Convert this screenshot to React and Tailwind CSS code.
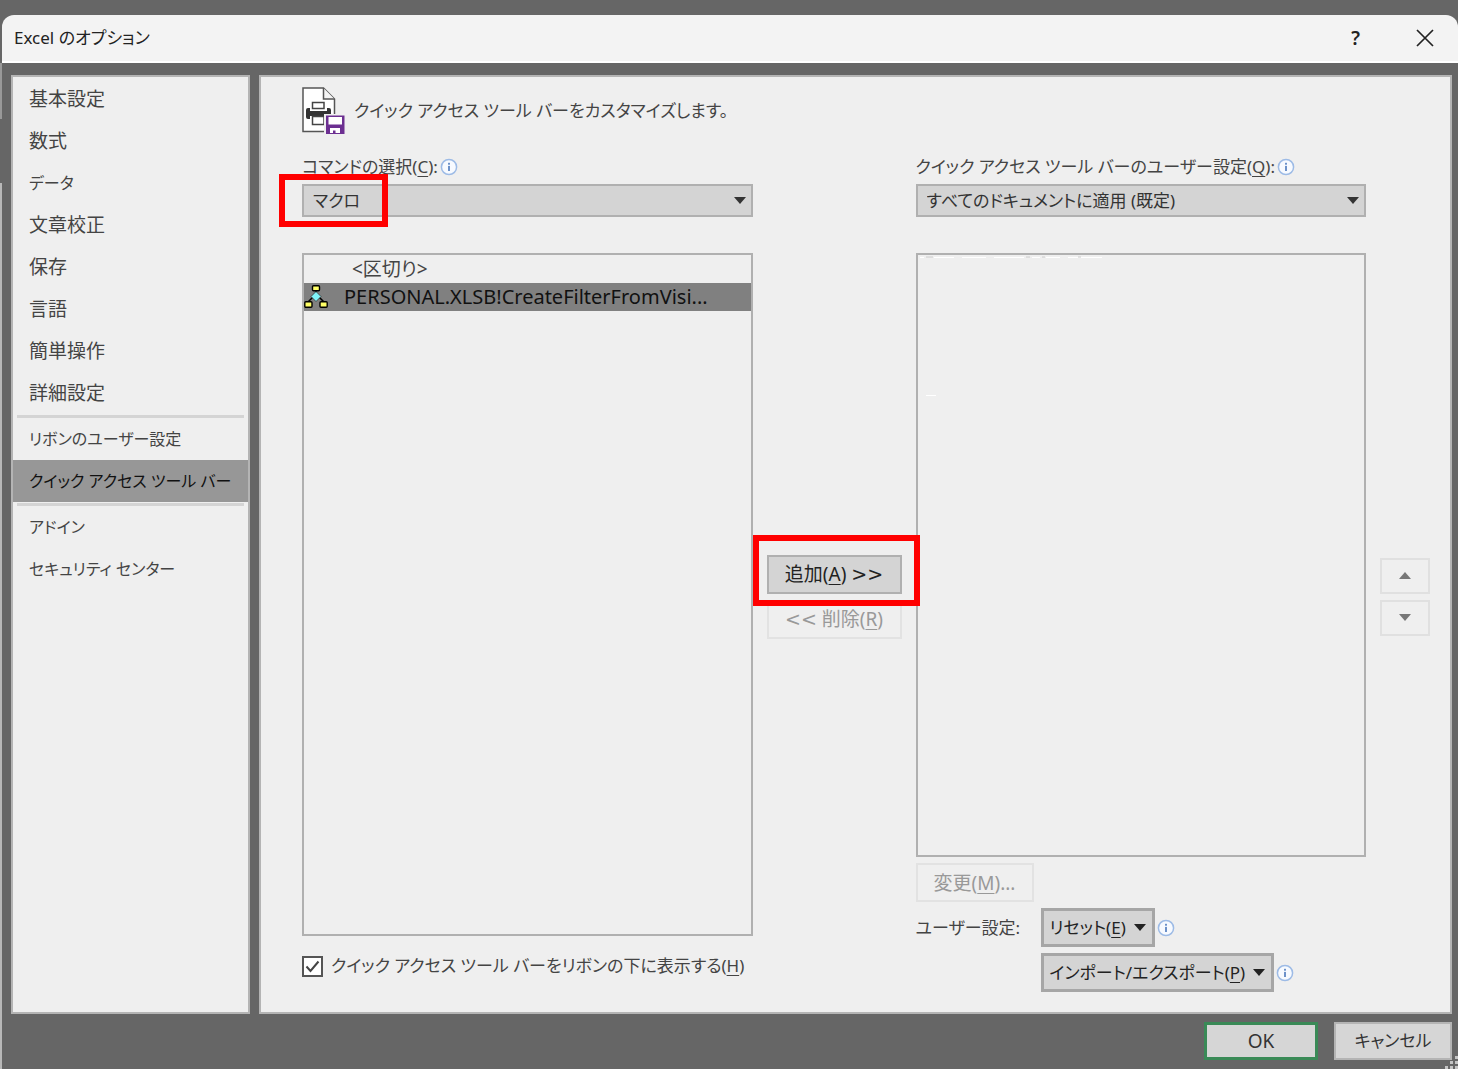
const categories = [
  { label: '基本設定' },
  { label: '数式' },
  { label: 'データ', kana: true },
  { label: '文章校正' },
  { label: '保存' },
  { label: '言語' },
  { label: '簡単操作' },
  { label: '詳細設定' },
  { label: 'リボンのユーザー設定', divider: true, kana: true },
  { label: 'クイック アクセス ツール バー', active: true, kana: true },
  { label: 'アドイン', divider: true, kana: true },
  { label: 'セキュリティ センター', kana: true },
]

function Triangle({ up = false, className = '' }) {
  return (
    <svg viewBox="0 0 12 7" className={`h-[7px] w-3 shrink-0 ${className}`} aria-hidden="true">
      <path d={up ? 'M0 7 6 0l6 7z' : 'M0 0h12L6 7z'} fill="currentColor" />
    </svg>
  )
}

function InfoIcon() {
  return (
    <svg viewBox="0 0 18 18" className="size-[18px] shrink-0" aria-hidden="true">
      <circle cx="9" cy="9" r="7.6" fill="#f7faff" stroke="#9dbbe6" strokeWidth="1.5" />
      <rect x="8.1" y="4.8" width="1.8" height="1.9" fill="#5c86c4" />
      <rect x="8.1" y="7.9" width="1.8" height="5.1" fill="#5c86c4" />
    </svg>
  )
}

function ToolbarIcon() {
  return (
    <svg viewBox="0 0 44 48" className="h-12 w-11 shrink-0" aria-hidden="true">
      <path d="M1 1h20.5L32.5 12v32.5H1z" fill="#fff" stroke="#555" strokeWidth="1.5" />
      <path d="M21.5 1v11h11" fill="#f4f4f4" stroke="#555" strokeWidth="1.5" />
      <path d="M4 23q0-2 2-2h2v3h17v-3h2q2 0 2 2v7q0 2-2 2h-2v-3H8v3H6q-2 0-2-2z" fill="#333" />
      <path d="M8 24h17v5H8z" fill="#333" />
      <rect x="10.5" y="15.5" width="11.5" height="6" fill="#fff" stroke="#444" strokeWidth="1.5" />
      <rect x="10.5" y="29.5" width="11.5" height="8" fill="#fff" stroke="#444" strokeWidth="1.5" />
      <path d="M22 27h22v21H22z" fill="#efefef" />
      <path d="M24 28.5h18.5V47H24z" fill="#6c2f91" />
      <path d="M26.5 30h13.5v7.5H26.5z" fill="#fff" />
      <path d="M28 41h10v5h-4.500v-2.500h-2.500V46h-3z" fill="#fff" />
    </svg>
  )
}

function MacroIcon() {
  return (
    <svg viewBox="0 0 24 24" className="size-6 shrink-0" aria-hidden="true">
      <path d="M12 5v4M9 12l-5 5M15 12l5 5" fill="none" stroke="#000" strokeWidth="1.5" />
      <path d="M12 6.5l5 5-5 5-5-5z" fill="#7ff4f8" stroke="#333" strokeWidth="0.8" />
      <g fill="#ffff66" stroke="#000" strokeWidth="1.4">
        <rect x="8.5" y="0.8" width="7" height="5" rx="1" />
        <rect x="0.8" y="16.8" width="7.2" height="5.4" rx="1" />
        <rect x="16" y="16.8" width="7.2" height="5.4" rx="1" />
      </g>
    </svg>
  )
}

function SelectBox({ id, value }) {
  return (
    <div className="relative text-[#333]">
      <select
        id={id}
        defaultValue={value}
        className="block h-[33px] w-full appearance-none border-2 border-[#b0b0b0] bg-[#d4d4d4] pl-[9px]"
      >
        <option>{value}</option>
      </select>
      <Triangle className="pointer-events-none absolute right-[7px] top-[13px]" />
    </div>
  )
}

function MenuButton({ children }) {
  return (
    <button
      type="button"
      className="flex h-[39px] items-center gap-2 border-[3px] border-[#a6a6a6] bg-[#d4d4d4] px-[6px] text-[#222]"
    >
      <span>{children}</span>
      <Triangle />
    </button>
  )
}

function Sidebar() {
  return (
    <nav className="w-[239px] shrink-0 border-2 border-[#b4b4b4] bg-[#efefef] pt-px text-[#444]">
      {categories.map((item) => (
        <div key={item.label}>
          {item.divider && <div className="mx-1 mt-px h-[3px] bg-[#d4d4d4]" />}
          <button
            type="button"
            className={`flex h-[42px] w-full items-center whitespace-nowrap pl-4 ${
              item.kana ? 'text-[16px]' : 'text-[19px]'
            } ${item.active ? 'bg-[#979797] text-[#111]' : ''}`}
          >
            {item.label}
          </button>
        </div>
      ))}
    </nav>
  )
}

function CommandColumn() {
  return (
    <div className="flex min-w-0 flex-col">
      <div className="mb-1 flex h-[27px] items-center gap-0.5">
        <label htmlFor="commands">
          コマンドの選択(<u>C</u>):
        </label>
        <InfoIcon />
      </div>
      <div className="relative">
        <SelectBox id="commands" value="マクロ" />
        <div className="pointer-events-none absolute -left-[23px] -top-[10px] h-[53px] w-[109px] border-[6px] border-[#f00]" />
      </div>
      <ul role="listbox" className="mt-9 flex-1 border-2 border-[#b0b0b0]">
        <li role="option" aria-selected="false" className="flex h-7 items-center pl-12 text-[19px]">
          &lt;区切り&gt;
        </li>
        <li
          role="option"
          aria-selected="true"
          className="flex h-7 items-center gap-4 bg-[#808080] text-[20px] text-[#111]"
        >
          <MacroIcon />
          <span className="truncate">PERSONAL.XLSB!CreateFilterFromVisi...</span>
        </li>
      </ul>
      <label className="mb-[6px] mt-[10px] flex h-10 items-center gap-2">
        <span className="relative size-[21px] shrink-0">
          <input
            type="checkbox"
            defaultChecked
            className="peer block size-full appearance-none border-2 border-[#555] bg-white"
          />
          <svg
            viewBox="0 0 21 21"
            className="pointer-events-none absolute inset-0 hidden peer-checked:block"
            aria-hidden="true"
          >
            <path d="M4.5 10.5l4 4.5 8-9.5" fill="none" stroke="#444" strokeWidth="2" />
          </svg>
        </span>
        <span className="whitespace-nowrap">
          クイック アクセス ツール バーをリボンの下に表示する(<u>H</u>)
        </span>
      </label>
    </div>
  )
}

function TransferButtons() {
  return (
    <div className="flex flex-col items-center justify-center gap-[6px] pt-12 text-[19px]">
      <div className="relative">
        <button type="button" className="h-[39px] w-[135px] border-2 border-[#b0b0b0] bg-[#d4d4d4] text-[#222]">
          追加(<u>A</u>) <span className="font-['DejaVu_Sans']">&gt;&gt;</span>
        </button>
        <div className="pointer-events-none absolute -bottom-3 -left-[14px] -right-[18px] -top-5 z-10 border-[6px] border-[#f00]" />
      </div>
      <button type="button" disabled className="h-[39px] w-[135px] border-2 border-[#e2e2e2] text-[#999]">
        <span className="font-['DejaVu_Sans']">&lt;&lt;</span> 削除(<u>R</u>)
      </button>
    </div>
  )
}

function ToolbarColumn() {
  return (
    <div className="flex min-w-0 flex-col">
      <div className="mb-1 flex h-[27px] items-center gap-0.5">
        <label htmlFor="toolbar">
          クイック アクセス ツール バーのユーザー設定(<u>Q</u>):
        </label>
        <InfoIcon />
      </div>
      <SelectBox id="toolbar" value="すべてのドキュメントに適用 (既定)" />
      <div role="listbox" className="relative mt-9 flex-1 border-2 border-[#b0b0b0]">
        <svg className="absolute left-0 top-0 h-36 w-48" viewBox="0 0 192 144" aria-hidden="true">
          <path
            d="M2 2.5h4M16 2.5h20M44 2.5h24M76 2.5h30M114 2.5h8M128 2.5h14M150 2.5h34M8 140.5h10"
            stroke="#fff"
            strokeWidth="1"
          />
          <path d="M8 2h7M108 2h4M124 2h3M160 2h3" stroke="#ccc" />
        </svg>
      </div>
      <button
        type="button"
        disabled
        className="mt-[6px] h-[39px] w-[118px] border-2 border-[#e2e2e2] text-[19px] text-[#999]"
      >
        変更(<u>M</u>)...
      </button>
      <div className="mt-[6px] grid grid-cols-[125px_1fr] items-center gap-y-[6px]">
        <span>ユーザー設定:</span>
        <div className="flex items-center gap-0.5">
          <MenuButton>
            リセット(<u>E</u>)
          </MenuButton>
          <InfoIcon />
        </div>
        <div className="col-start-2 flex items-center gap-0.5">
          <MenuButton>
            インポート/エクスポート(<u>P</u>)
          </MenuButton>
          <InfoIcon />
        </div>
      </div>
    </div>
  )
}

function OrderButtons() {
  const base = 'flex h-9 w-[50px] items-center justify-center border-2 border-[#e0e0e0] text-[#777]'
  return (
    <div className="flex flex-col items-end justify-center gap-[6px] pt-12">
      <button type="button" disabled aria-label="上へ" className={base}>
        <Triangle up />
      </button>
      <button type="button" disabled aria-label="下へ" className={base}>
        <Triangle />
      </button>
    </div>
  )
}

export default function App() {
  return (
    <div className="flex min-h-screen flex-col bg-[#666] pt-[15px] font-['Noto_Sans','Noto_Sans_CJK_JP',sans-serif] text-[17px] leading-7 text-[#444] [font-feature-settings:'palt'] [&_u]:underline-offset-3">
      <header className="ml-0.5 flex h-12 items-center rounded-t-xl border-b-2 border-white bg-[#f3f3f3] pl-3 pr-6 text-[#222]">
        <h1 className="flex-1">Excel のオプション</h1>
        <button type="button" aria-label="ヘルプ" className="mr-14 text-[19px] font-semibold">
          ?
        </button>
        <button type="button" aria-label="閉じる">
          <svg viewBox="0 0 18 18" className="size-[18px]" aria-hidden="true">
            <path d="M1 1l16 16M17 1L1 17" stroke="#222" strokeWidth="1.7" />
          </svg>
        </button>
      </header>

      <div className="flex flex-1">
        {/* edge of the worksheet behind the dialog */}
        <div className="flex w-0.5 shrink-0 flex-col">
          <div className="h-14 bg-[#999]" />
          <div className="h-16" />
          <div className="flex-1 bg-[#b8b8b8]" />
        </div>

        <div className="flex min-w-0 flex-1 flex-col">
          <div className="flex flex-1 gap-[9px] pl-[9px] pr-[6px] pt-3">
            <Sidebar />
            <main className="flex min-w-0 flex-1 flex-col border-2 border-[#b4b4b4] bg-[#efefef] pb-5 pl-[41px] pr-5 pt-[10px]">
              <div className="flex items-center gap-2">
                <ToolbarIcon />
                <h2>クイック アクセス ツール バーをカスタマイズします。</h2>
              </div>
              <div className="mt-[18px] grid flex-1 grid-cols-[1fr_163px_1fr_64px]">
                <CommandColumn />
                <TransferButtons />
                <ToolbarColumn />
                <OrderButtons />
              </div>
            </main>
          </div>

          <footer className="relative flex justify-end gap-4 pb-[9px] pr-[6px] pt-2 text-[#333]">
            <button type="button" className="h-[38px] w-[114px] border-[3px] border-[#3a8a57] bg-[#d6d6d6] text-[19px]">
              OK
            </button>
            <button type="button" className="h-[38px] w-[118px] border-2 border-[#b4b4b4] bg-[#d6d6d6]">
              キャンセル
            </button>
            <svg viewBox="0 0 14 14" className="absolute bottom-0 right-0 size-[14px]" aria-hidden="true">
              <path
                d="M11 1h3v3h-3zM6 6h3v3H6zM11 6h3v3h-3zM1 11h3v3H1zM6 11h3v3H6zM11 11h3v3h-3z"
                fill="#c4c4c4"
              />
            </svg>
          </footer>
        </div>
      </div>
    </div>
  )
}
